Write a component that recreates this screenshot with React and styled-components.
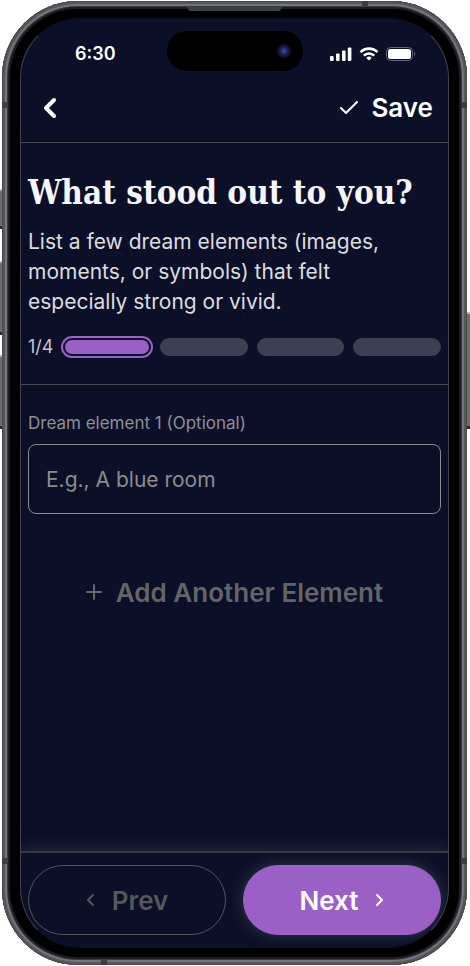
import styled, { createGlobalStyle } from 'styled-components';
import { useState } from 'react';


export default function App(){
    const [element, setElement] = useState("");
    const step = 1;
    const steps = [1, 2, 3, 4];

    return(
    <Page>
    <GlobalStyle />
    <Phone>
        <SideKey side="left" top={188} height={40} />
        <SideKey side="left" top={260} height={74} />
        <SideKey side="left" top={354} height={74} />
        <SideKey side="right" top={311} height={117} />
        <Band side="left" edge="top" />
        <Band side="right" edge="top" />
        <Band side="left" edge="bottom" />
        <Band side="right" edge="bottom" />
        <CapBand edge="top" />
        <CapBand edge="bottom" />
        <Speaker />
        <Screen>
            <Island><Camera /></Island>
            <StatusBar>
                <Time>6:30</Time>
                <StatusIcons>
                    <SignalIcon />
                    <WifiIcon />
                    <BatteryIcon />
                </StatusIcons>
            </StatusBar>
            <Header>
                <IconButton type="button" aria-label="Back">
                    <Stroke width="14" height="22" viewBox="0 0 14 22" thickness={4}>
                        <path d="M11 3 3 11l8 8" />
                    </Stroke>
                </IconButton>
                <SaveButton type="button">
                    <Stroke width="20" height="16" viewBox="0 0 20 16" thickness={2}>
                        <path d="m2 8 5 5L18 2" />
                    </Stroke>
                    Save
                </SaveButton>
            </Header>
            <Intro>
                <h1>What stood out to you?</h1>
                <p>List a few dream elements (images, moments, or symbols) that felt especially strong or vivid.</p>
                <Progress>
                    <span>{step}/{steps.length}</span>
                    <Bars>
                        {steps.map(item => <Bar key={item} active={item === step ? 1 : 0} />)}
                    </Bars>
                </Progress>
            </Intro>
            <Form onSubmit={(e) => e.preventDefault()}>
                <label htmlFor="element1">Dream element 1 (Optional)</label>
                <input
                    id="element1"
                    type="text"
                    placeholder="E.g., A blue room"
                    value={element}
                    onChange={(e) => setElement(e.target.value)}
                />
                <AddButton type="button">
                    <Stroke width="16" height="16" viewBox="0 0 16 16" thickness={2}>
                        <path d="M8 1v14M1 8h14" />
                    </Stroke>
                    Add Another Element
                </AddButton>
            </Form>
            <Footer>
                <PrevButton type="button">
                    <Stroke width="8" height="14" viewBox="0 0 8 14" thickness={2}>
                        <path d="M7 2 2 7l5 5" />
                    </Stroke>
                    Prev
                </PrevButton>
                <NextButton type="button">
                    Next
                    <Stroke width="8" height="14" viewBox="0 0 8 14" thickness={2}>
                        <path d="m1 2 5 5-5 5" />
                    </Stroke>
                </NextButton>
            </Footer>
        </Screen>
    </Phone>
    </Page>
    );
}

function SignalIcon(){
    return(
    <svg width="22" height="14" viewBox="0 0 22 14" fill="#FFFFFF">
        <rect x="0" y="9" width="3.6" height="5" rx="1" />
        <rect x="6" y="6.5" width="3.6" height="7.5" rx="1" />
        <rect x="12" y="3.5" width="3.6" height="10.5" rx="1" />
        <rect x="17.8" y="0.5" width="3.6" height="13.5" rx="1" />
    </svg>
    );
}

function WifiIcon(){
    return(
    <svg width="20" height="14" viewBox="0 0 20 14" fill="none" stroke="#FFFFFF" strokeWidth="2.6">
        <path d="M1.5 5.2a12 12 0 0 1 17 0" />
        <path d="M4.8 8.7a7.4 7.4 0 0 1 10.4 0" />
        <path d="M10 13.6 7.3 10.9a3.8 3.8 0 0 1 5.4 0Z" fill="#FFFFFF" stroke="none" />
    </svg>
    );
}

function BatteryIcon(){
    return(
    <svg width="30" height="14" viewBox="0 0 30 14">
        <rect x="0.5" y="0.5" width="26" height="13" rx="4" fill="none" stroke="#63657A" />
        <rect x="2" y="2" width="23" height="10" rx="2.5" fill="#FFFFFF" />
        <path d="M28 4.8c1.6.8 1.6 3.6 0 4.4Z" fill="#63657A" />
    </svg>
    );
}


const GlobalStyle = createGlobalStyle`
    *{
        box-sizing: border-box;
    }
    body{
        margin: 0;
        background: #FFFFFF;
        font-family: 'Inter', sans-serif;
    }
    h1, p{
        margin: 0;
    }
    button, input{
        font-family: inherit;
    }
    button{
        padding: 0;
        border: none;
        background: none;
        cursor: pointer;
    }
`

const Page = styled.div`
    min-height: 100vh;
    display: flex;
    padding: 1px 3px 1px 2px;
    overflow: hidden;
`

const Phone = styled.div`
    position: relative;
    flex: 1;
    min-width: 0;
    display: flex;
    padding: 17px 18px;
    border-radius: 76px;
    background: #000000;
    box-shadow: inset 0 0 0 1px #4A4B4D, inset 0 0 0 3px #55585B, inset 0 0 0 5px #72767D,
        inset 0 0 0 6px #3A3B3E, inset 0 0 0 8px #1D1D1F;
`

const SideKey = styled.div`
    position: absolute;
    ${props => props.side}: -3px;
    top: ${props => props.top}px;
    width: 3px;
    height: ${props => props.height}px;
    background: #6B6C6C;
    border-top: 2px solid #B5B6B5;
    border-bottom: 3px solid #2B2B2B;
`

const Band = styled.div`
    position: absolute;
    ${props => props.side}: 0;
    ${props => props.edge}: 101px;
    width: 6px;
    height: 6px;
    background: #3C3D40;
`

const CapBand = styled.div`
    position: absolute;
    ${props => props.edge}: 0;
    ${props => props.edge === "top" ? "right" : "left"}: 99px;
    width: 6px;
    height: 6px;
    background: #3C3D40;
`

const Speaker = styled.div`
    position: absolute;
    top: 6px;
    left: 50%;
    width: 96px;
    height: 4px;
    margin-left: -48px;
    background: #39403F;
    clip-path: polygon(0 0, 100% 0, 97% 100%, 3% 100%);
`

const Screen = styled.main`
    position: relative;
    flex: 1;
    min-width: 0;
    display: flex;
    flex-direction: column;
    overflow: hidden;
    border: 1px solid #41434E;
    border-top-color: #0B0F27;
    border-bottom-color: #0B0F27;
    border-radius: 60px;
    background: #0B0F27;
    color: #FFFFFF;
`

const Island = styled.div`
    position: absolute;
    top: 12px;
    left: 50%;
    width: 136px;
    height: 40px;
    margin-left: -68px;
    padding-right: 12px;
    display: flex;
    align-items: center;
    justify-content: flex-end;
    border-radius: 20px;
    background: #000000;
`

const Camera = styled.div`
    width: 14px;
    height: 14px;
    border-radius: 50%;
    background: radial-gradient(circle, #3D55A8 0, #1B2560 35%, #0D1130 60%, #050509 100%);
`

const StatusBar = styled.div`
    height: 56px;
    padding: 14px 32px 0 54px;
    display: flex;
    align-items: center;
    justify-content: space-between;
`

const Time = styled.time`
    font-size: 18px;
    font-weight: 600;
    line-height: 24px;
`

const StatusIcons = styled.div`
    display: flex;
    align-items: center;
    gap: 7px;
`

const Header = styled.header`
    height: 68px;
    padding: 0 15px 2px 22px;
    display: flex;
    align-items: center;
    justify-content: space-between;
    border-bottom: 1px solid #464954;
`

const Stroke = styled.svg.withConfig({ shouldForwardProp: prop => prop !== 'thickness' })`
    flex: none;
    fill: none;
    stroke: currentColor;
    stroke-width: ${props => props.thickness};
    stroke-linecap: round;
    stroke-linejoin: round;
`

const IconButton = styled.button`
    display: flex;
    color: #FFFFFF;
`

const SaveButton = styled.button`
    display: flex;
    align-items: center;
    gap: 12px;
    color: #FFFFFF;
    font-size: 26px;
    font-weight: 600;
    line-height: 32px;
`

const Intro = styled.section`
    padding: 24px 7px 27px;
    border-bottom: 1px solid #464954;
    h1{
        font-family: 'DejaVu Serif Condensed', 'DejaVu Serif', serif;
        font-weight: 700;
        font-size: 33px;
        line-height: 52px;
        color: #F5F6FA;
        white-space: nowrap;
    }
    p{
        max-width: 372px;
        margin-top: 8px;
        font-size: 21px;
        line-height: 30px;
        color: #DDDDE0;
    }
`

const Progress = styled.div`
    margin-top: 20px;
    display: flex;
    align-items: center;
    gap: 10px;
    span{
        font-size: 18px;
        line-height: 20px;
        color: #C6C6CB;
    }
`

const Bars = styled.div`
    flex: 1;
    display: flex;
    gap: 9px;
`

const Bar = styled.div`
    flex: 1 1 0;
    height: 18px;
    border-radius: 9px;
    border: 2px solid ${props => props.active ? "#0B0F27" : "#3D4053"};
    background: ${props => props.active ? "#9B60C5" : "#3D4053"};
    box-shadow: ${props => props.active ? "0 0 0 2px #9B60C5" : "none"};
`

const Form = styled.form`
    flex: 1;
    padding: 26px 7px 0;
    display: flex;
    flex-direction: column;
    label{
        font-size: 17px;
        line-height: 24px;
        color: #8F9096;
    }
    input{
        width: 100%;
        height: 70px;
        margin-top: 9px;
        padding: 0 17px;
        border: 1px solid #8A8C94;
        border-radius: 8px;
        background: transparent;
        color: #FFFFFF;
        font-size: 21px;
        outline: none;
    }
    input::placeholder{
        color: #8C8D8F;
        opacity: 1;
    }
`

const AddButton = styled.button`
    height: 70px;
    margin-top: 43px;
    display: flex;
    align-items: center;
    justify-content: center;
    gap: 14px;
    color: #636569;
    font-size: 26px;
    font-weight: 600;
`

const Footer = styled.footer`
    padding: 12px 7px;
    display: flex;
    gap: 17px;
    border-top: 2px solid #343746;
    box-shadow: 0 -2px 16px #2A2D3D;
`

const NavButton = styled.button`
    flex: 1;
    height: 70px;
    display: flex;
    align-items: center;
    justify-content: center;
    gap: 18px;
    border: 1px solid;
    border-radius: 35px;
    font-size: 26px;
    font-weight: 600;
`

const PrevButton = styled(NavButton)`
    border-color: #55575D;
    color: #55575B;
`

const NextButton = styled(NavButton)`
    border-color: #9B60C5;
    background: #9B60C5;
    color: #FFFFFF;
    box-shadow: 0 0 16px #2F3A50;
`
